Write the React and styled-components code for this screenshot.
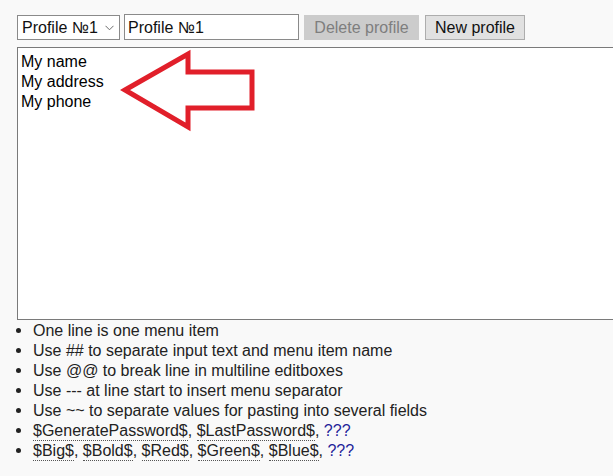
import React, { useState } from 'react';
import styled, { createGlobalStyle } from 'styled-components';

const GlobalStyle = createGlobalStyle`
  html, body {
    margin: 0;
    padding: 0;
    background: #f9f9f9;
    overflow: hidden;
  }
  body {
    font-family: "Liberation Sans", Arial, sans-serif;
    font-size: 16px;
    color: #222;
  }
`;

const Page = styled.div`
  width: 613px;
  height: 476px;
  box-sizing: border-box;
  overflow: hidden;
  padding: 14px 0 0 17px;
`;

const Toolbar = styled.div`
  display: flex;
  align-items: center;
  height: 26px;
  white-space: nowrap;
`;

const SelectWrap = styled.div`
  position: relative;
  flex: none;
  width: 103px;
  height: 25px;
  margin-right: 4px;
`;

const Select = styled.select`
  appearance: none;
  width: 100%;
  height: 100%;
  box-sizing: border-box;
  border: 1px solid #8a8a8a;
  border-radius: 0;
  background: #fff;
  padding: 1px 0 0 4px;
  font: 16px "Liberation Sans", Arial, sans-serif;
  color: #111;
`;

const Chevron = styled.svg`
  position: absolute;
  right: 6px;
  top: 10px;
  pointer-events: none;
`;

const NameInput = styled.input`
  flex: none;
  width: 175px;
  height: 26px;
  box-sizing: border-box;
  border: 1px solid #8a8a8a;
  background: #fff;
  padding: 1px 0 0 3px;
  margin: 0 5px 0 0;
  font: 16px "Liberation Sans", Arial, sans-serif;
  color: #111;
  outline: none;
`;

const Button = styled.button`
  flex: none;
  height: 25px;
  box-sizing: border-box;
  padding: 2px 0 0;
  margin: 0 6px 0 0;
  white-space: nowrap;
  font: 16px "Liberation Sans", Arial, sans-serif;
  border: 1px solid ${(p) => (p.disabled ? '#cccccc' : '#adadad')};
  background: ${(p) => (p.disabled ? '#cccccc' : '#e1e1e1')};
  color: ${(p) => (p.disabled ? '#7e7e7e' : '#111')};
  border-radius: 0;
  width: ${(p) => p.w}px;
`;

const Editor = styled.div`
  position: relative;
  margin-top: 7px;
`;

const TextArea = styled.textarea`
  display: block;
  width: 620px;
  height: 273px;
  box-sizing: border-box;
  border: 1px solid #7a7a7a;
  background: #fff;
  padding: 4px 3px 3px;
  margin: 0;
  resize: none;
  overflow: hidden;
  font: 16px/20px "Liberation Sans", Arial, sans-serif;
  color: #000;
  outline: none;
`;

const Arrow = styled.svg`
  position: absolute;
  left: 0;
  top: 0;
  pointer-events: none;
`;

const Hints = styled.ul`
  margin: 1px 0 0;
  padding: 0 0 0 16px;
  list-style: disc;
  white-space: nowrap;
  line-height: 20px;
  color: #222;

  li::marker {
    font-size: 17px;
  }
`;

const Token = styled.span`
  border-bottom: 1px dotted #555;
  padding-bottom: 1px;
`;

const Help = styled.span`
  color: #1f1f9a;
`;

const initialText = 'My name\nMy address\nMy phone';

export default function App() {
  const [name, setName] = useState('Profile №1');
  const [text, setText] = useState(initialText);

  return (
    <>
      <GlobalStyle />
      <Page>
        <Toolbar>
          <SelectWrap>
            <Select value="1" onChange={() => {}}>
              <option value="1">Profile №1</option>
            </Select>
            <Chevron width="9" height="6" viewBox="0 0 9 6">
              <path d="M0.5 0.8 L4.5 4.8 L8.5 0.8" fill="none" stroke="#6b6b6b" strokeWidth="1" />
            </Chevron>
          </SelectWrap>
          <NameInput value={name} onChange={(e) => setName(e.target.value)} />
          <Button disabled w={115}>Delete profile</Button>
          <Button w={100}>New profile</Button>
        </Toolbar>

        <Editor>
          <TextArea value={text} onChange={(e) => setText(e.target.value)} spellCheck={false} />
          <Arrow width="260" height="100" viewBox="0 0 260 100">
            <polygon
              points="108,43 171,7 171,25 235,25 235,61 171,61 171,80"
              fill="none"
              stroke="#e11f2a"
              strokeWidth="5"
              strokeLinejoin="miter"
            />
          </Arrow>
        </Editor>

        <Hints>
          <li>One line is one menu item</li>
          <li>Use ## to separate input text and menu item name</li>
          <li>Use @@ to break line in multiline editboxes</li>
          <li>Use --- at line start to insert menu separator</li>
          <li>Use ~~ to separate values for pasting into several fields</li>
          <li>
            <Token>$GeneratePassword$</Token>, <Token>$LastPassword$</Token>, <Help>???</Help>
          </li>
          <li>
            <Token>$Big$</Token>, <Token>$Bold$</Token>, <Token>$Red$</Token>,{' '}
            <Token>$Green$</Token>, <Token>$Blue$</Token>, <Help>???</Help>
          </li>
        </Hints>
      </Page>
    </>
  );
}
